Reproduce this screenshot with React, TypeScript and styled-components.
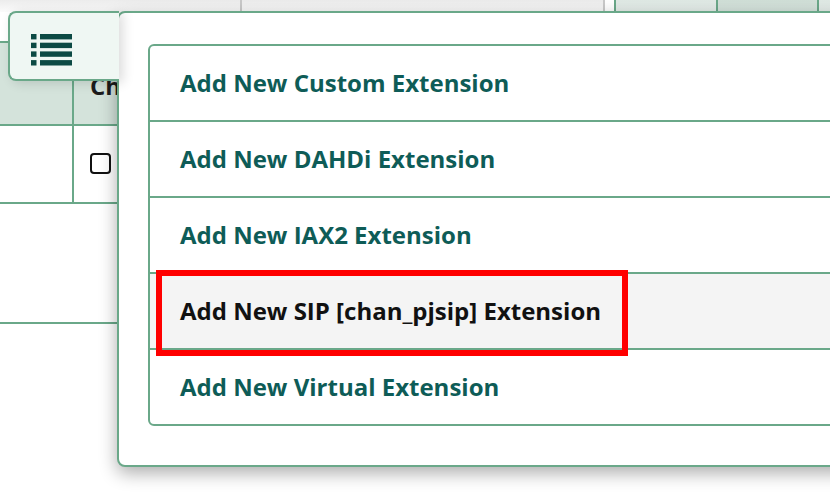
import React from 'react';
import styled, { createGlobalStyle } from 'styled-components';

const GREEN = '#6aa889';
const TEAL = '#0e5c57';

const Global = createGlobalStyle`
  html, body { margin: 0; padding: 0; background: #fff; }
  body {
    width: 830px;
    height: 502px;
    overflow: hidden;
    font-family: "Open Sans", "Liberation Sans", sans-serif;
  }
`;

const Page = styled.div`
  position: relative;
  width: 830px;
  height: 502px;
  overflow: hidden;
  background: #fff;
`;

const TopBar = styled.div`
  display: flex;
  height: 12px;
`;

type SegKind = 'plain' | 'gap' | 'btn' | 'btnDark';

const TopSeg = styled.div<{ $w: number; $kind: SegKind; $edge: 'gray' | 'green' | 'none' }>`
  flex: 0 0 ${(p) => p.$w}px;
  box-sizing: border-box;
  background: ${(p) =>
    p.$kind === 'plain'
      ? 'linear-gradient(#ececec, #fbfbfb)'
      : p.$kind === 'btn'
      ? 'linear-gradient(#dfe9e4, #e6eeea)'
      : p.$kind === 'btnDark'
      ? 'linear-gradient(#d0dfd7, #d6e4dd)'
      : '#fff'};
  border-right: ${(p) =>
    p.$edge === 'gray' ? '2px solid #c9c9c9' : p.$edge === 'green' ? `2px solid ${GREEN}` : 'none'};
`;

const Table = styled.div`
  margin-top: 29px;
  border-top: 2px solid ${GREEN};
  display: flex;
  flex-direction: column;
`;

const Row = styled.div<{ $h: number; $head?: boolean; $cols?: boolean }>`
  display: grid;
  grid-template-columns: ${(p) => (p.$cols ? '74px 1fr' : '1fr')};
  height: ${(p) => p.$h}px;
  border-bottom: 2px solid ${GREEN};
  background: ${(p) => (p.$head ? '#d4e3db' : '#fff')};
`;

const Cell = styled.div<{ $divider?: boolean }>`
  display: flex;
  align-items: center;
  padding-left: 16px;
  border-right: ${(p) => (p.$divider ? `2px solid ${GREEN}` : 'none')};
  font-weight: 700;
  font-size: 24px;
  color: #1c1c1c;
`;

const HeadLabel = styled.span`
  display: block;
  white-space: nowrap;
  margin-top: 4px;
`;

const CheckBox = styled.span`
  display: block;
  width: 21px;
  height: 21px;
  box-sizing: border-box;
  border: 2px solid #111;
  border-radius: 4px;
  background: #fff;
  margin-top: -2px;
`;

const Toggle = styled.button`
  position: absolute;
  left: 8px;
  top: 11px;
  width: 111px;
  height: 70px;
  box-sizing: border-box;
  margin: 0;
  padding: 21px 0 0 21px;
  display: flex;
  align-items: flex-start;
  background: #eff7f3;
  border: 2px solid ${GREEN};
  border-right: none;
  border-radius: 8px 0 0 8px;
  box-shadow: 4px 2px 12px rgba(0, 0, 0, 0.14);
  z-index: 3;
`;

const Menu = styled.div`
  position: absolute;
  left: 117px;
  top: 11px;
  width: 760px;
  height: 456px;
  box-sizing: border-box;
  border: 2px solid ${GREEN};
  border-radius: 8px;
  background: #fff;
  box-shadow: 0 6px 18px rgba(0, 0, 0, 0.33);
  padding: 31px 0 0 29px;
  z-index: 2;
`;

const List = styled.ul`
  list-style: none;
  margin: 0;
  padding: 0;
  border: 2px solid ${GREEN};
  border-radius: 6px;
  display: flex;
  flex-direction: column;
`;

const Item = styled.li<{ $active?: boolean; $last?: boolean }>`
  position: relative;
  height: 74px;
  display: flex;
  align-items: center;
  padding-left: 30px;
  border-bottom: ${(p) => (p.$last ? 'none' : `2px solid ${GREEN}`)};
  background: ${(p) => (p.$active ? '#f4f4f4' : 'transparent')};
  color: ${(p) => (p.$active ? '#111' : TEAL)};
  font-weight: 700;
  font-size: 24px;
  white-space: nowrap;
`;

const ItemText = styled.span`
  position: relative;
  z-index: 2;
  margin-top: -1px;
`;

const Annotation = styled.span`
  position: absolute;
  left: 6px;
  top: -4px;
  width: 472px;
  height: 86px;
  box-sizing: border-box;
  border: 6px solid #ff0000;
  z-index: 1;
`;

const ListIcon = () => (
  <svg width="41" height="32" viewBox="0 0 41 32" fill="#0c4a44">
    {[0, 8.7, 17.4, 26.1].map((y) => (
      <g key={y}>
        <rect x="0" y={y} width="5.5" height="5.4" />
        <rect x="9" y={y} width="32" height="5.4" />
      </g>
    ))}
  </svg>
);

const segs: { w: number; kind: SegKind; edge: 'gray' | 'green' | 'none' }[] = [
  { w: 242, kind: 'plain', edge: 'gray' },
  { w: 363, kind: 'plain', edge: 'gray' },
  { w: 11, kind: 'gap', edge: 'green' },
  { w: 102, kind: 'btn', edge: 'green' },
  { w: 101, kind: 'btnDark', edge: 'green' },
  { w: 20, kind: 'btn', edge: 'none' },
];

const items = [
  'Add New Custom Extension',
  'Add New DAHDi Extension',
  'Add New IAX2 Extension',
  'Add New SIP [chan_pjsip] Extension',
  'Add New Virtual Extension',
];

export default function App() {
  return (
    <Page>
      <Global />
      <TopBar>
        {segs.map((s, i) => (
          <TopSeg key={i} $w={s.w} $kind={s.kind} $edge={s.edge} />
        ))}
      </TopBar>
      <Table>
        <Row $h={81} $head $cols>
          <Cell $divider />
          <Cell>
            <HeadLabel>Ch</HeadLabel>
          </Cell>
        </Row>
        <Row $h={76} $cols>
          <Cell $divider />
          <Cell>
            <CheckBox />
          </Cell>
        </Row>
        <Row $h={118}>
          <Cell />
        </Row>
      </Table>

      <Toggle aria-label="Add extension menu">
        <ListIcon />
      </Toggle>
      <Menu>
        <List>
          {items.map((t, i) => (
            <Item key={t} $active={i === 3} $last={i === items.length - 1}>
              {i === 3 && <Annotation />}
              <ItemText>{t}</ItemText>
            </Item>
          ))}
        </List>
      </Menu>
    </Page>
  );
}
